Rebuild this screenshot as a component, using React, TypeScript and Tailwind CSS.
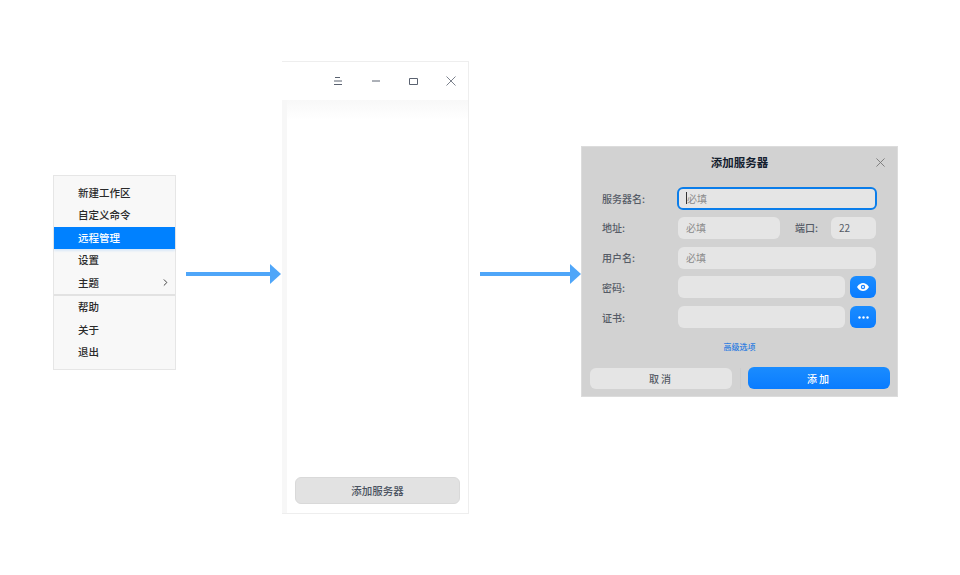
import { ChevronRight } from "lucide-react";

const FONT = "font-['Noto_Sans_CJK_SC','Noto_Sans',sans-serif]";

function Arrow({ className, length }: { className: string; length: number }) {
  const neck = length - 11;
  return (
    <svg className={className} width={length} height="20" viewBox={`0 0 ${length} 20`}>
      <rect x="0" y="8" width={neck + 1} height="4" fill="#4fa6f9" />
      <polygon points={`${neck},0 ${length},10 ${neck},20`} fill="#4fa6f9" />
    </svg>
  );
}

function MenuItem({ label, active, arrow }: { label: string; active?: boolean; arrow?: boolean }) {
  return (
    <div className={`flex h-[22.5px] items-center justify-between pl-[24px] pr-[4px] text-[10.5px] font-medium ${active ? "bg-[#0081ff] text-white shadow-[0_2px_2px_rgba(0,129,255,0.12)]" : "text-[#2a2a2a]"}`}>
      <span>{label}</span>
      {arrow && <ChevronRight className="h-[11px] w-[11px] text-[#333]" strokeWidth={2} />}
    </div>
  );
}

function Field({ label, children }: { label: string; children: React.ReactNode }) {
  return (
    <div className="flex h-[22px] items-center">
      <span className="w-[76px] shrink-0 text-[10px] font-medium text-[#555b66]">{label}</span>
      {children}
    </div>
  );
}

function Input({ text, className = "" }: { text?: string; className?: string }) {
  return (
    <div className={`flex h-[22px] items-center rounded-[6px] bg-[#e5e5e5] pl-[8px] text-[10px] text-[#8b8b8b] ${className}`}>
      {text}
    </div>
  );
}

export default function App() {
  return (
    <div className={`relative h-[575px] w-[960px] overflow-hidden bg-white ${FONT}`}>
      {/* menu */}
      <div className="absolute left-[53px] top-[175px] flex h-[195px] w-[123px] flex-col border border-[#e6e6e6] bg-[#f8f8f8] pt-[5.5px]">
        <MenuItem label="新建工作区" />
        <MenuItem label="自定义命令" />
        <MenuItem label="远程管理" active />
        <MenuItem label="设置" />
        <MenuItem label="主题" arrow />
        <div className="h-[2px] bg-[#e2e2e2]" />
        <MenuItem label="帮助" />
        <MenuItem label="关于" />
        <MenuItem label="退出" />
      </div>

      <Arrow className="absolute left-[186px] top-[264px]" length={95} />

      {/* remote panel */}
      <div className="absolute left-[282px] top-[61px] flex h-[453px] w-[187px] flex-col border-b border-r border-t border-[#eeeeee] bg-white">
        <div className="flex h-[38px] shrink-0 items-center justify-end pr-[12px] text-[#5a6270]">
          <svg className="mr-[30px]" width="8" height="10" viewBox="0 0 8 10" fill="none" stroke="currentColor" strokeWidth="1">
            <path d="M1 1.5h5M0 5h8M0 8.5h8" />
          </svg>
          <svg className="mr-[29px]" width="8" height="2" viewBox="0 0 8 2" fill="none" stroke="currentColor" strokeWidth="1">
            <path d="M0 1h8" />
          </svg>
          <svg className="mr-[28px]" width="9" height="7" viewBox="0 0 9 7" fill="none" stroke="currentColor" strokeWidth="1">
            <path d="M.5.5h8v6h-8z" />
          </svg>
          <svg width="10" height="10" viewBox="0 0 10 10" fill="none" stroke="currentColor" strokeWidth="0.8">
            <path d="M.5.5l9 9M9.5.5l-9 9" />
          </svg>
        </div>
        <div className="flex flex-1">
          <div className="w-[5px] bg-[#f7f7f7]" />
          <div className="flex flex-1 flex-col">
            <div className="h-[20px] bg-gradient-to-b from-[#f8f8f8] to-white" />
            <div className="mt-auto px-[8px] pb-[9px]">
              <div className="flex h-[27px] items-center justify-center rounded-[6px] border border-[#d9d9d9] bg-[#e2e2e2] text-[10.5px] font-medium text-[#4a5260]">
                添加服务器
              </div>
            </div>
          </div>
        </div>
      </div>

      <Arrow className="absolute left-[480px] top-[264px]" length={101} />

      {/* dialog */}
      <div className="absolute left-[581px] top-[146px] flex h-[251px] w-[317px] flex-col border border-[#dcdcdc] bg-[#d2d2d2]">
        <div className="relative flex h-[32px] shrink-0 items-center justify-center text-[11.5px] font-bold text-[#14202e]">
          添加服务器
          <svg className="absolute right-[12px] top-[11px] text-[#777]" width="9" height="9" viewBox="0 0 10 10" fill="none" stroke="currentColor" strokeWidth="1">
            <path d="M.5.5l9 9M9.5.5l-9 9" />
          </svg>
        </div>
        <div className="flex flex-col gap-[7.75px] pl-[20px] pr-[21px] pt-[8px]">
          <Field label="服务器名:">
            <div className="-mx-[1px] flex h-[23px] flex-1 items-center rounded-[6px] border-2 border-[#0a7dea] bg-[#e5e5e5] pl-[7px] text-[10px] text-[#8b8b8b]">
              <span className="h-[12px] w-[1px] bg-[#333]" />
              必填
            </div>
          </Field>
          <Field label="地址:">
            <Input text="必填" className="w-[102px]" />
            <span className="ml-[15px] w-[36px] text-[10px] font-medium text-[#555b66]">端口:</span>
            <Input text="22" className="flex-1 text-[#555b66]" />
          </Field>
          <Field label="用户名:">
            <Input text="必填" className="flex-1" />
          </Field>
          <Field label="密码:">
            <Input className="flex-1" />
            <div className="ml-[5px] flex h-[22px] w-[26px] items-center justify-center rounded-[6px] bg-gradient-to-b from-[#1a8cff] to-[#0a7cff]">
              <svg width="12" height="8" viewBox="0 0 12 8">
                <path d="M0 4C2 1 4 0 6 0s4 1 6 4c-2 3-4 4-6 4S2 7 0 4z" fill="#fff" />
                <circle cx="6" cy="4" r="2.2" fill="#1a84ff" />
                <circle cx="6" cy="4" r="1" fill="#fff" />
              </svg>
            </div>
          </Field>
          <Field label="证书:">
            <Input className="flex-1" />
            <div className="ml-[5px] flex h-[22px] w-[26px] items-center justify-center rounded-[6px] bg-gradient-to-b from-[#1a8cff] to-[#0a7cff]">
              <svg width="11" height="3" viewBox="0 0 11 3" fill="#fff">
                <circle cx="1.5" cy="1.5" r="1.2" />
                <circle cx="5.5" cy="1.5" r="1.2" />
                <circle cx="9.5" cy="1.5" r="1.2" />
              </svg>
            </div>
          </Field>
        </div>
        <div className="mt-[13px] text-center text-[8px] font-medium text-[#2e7de0]">高级选项</div>
        <div className="mt-auto flex items-center pb-[7px] pl-[8px] pr-[7px]">
          <div className="flex h-[21px] w-[142px] items-center justify-center rounded-[6px] bg-[#e5e5e5] text-[10px] font-medium tracking-[2px] text-[#555b66]">
            取消
          </div>
          <div className="mx-[7.5px] h-[21px] w-[1px] bg-[#cccccc]" />
          <div className="flex h-[22px] flex-1 items-center justify-center rounded-[6px] bg-gradient-to-b from-[#1a8cff] to-[#0a7cff] text-[10px] font-medium tracking-[2px] text-white">
            添加
          </div>
        </div>
      </div>
    </div>
  );
}
